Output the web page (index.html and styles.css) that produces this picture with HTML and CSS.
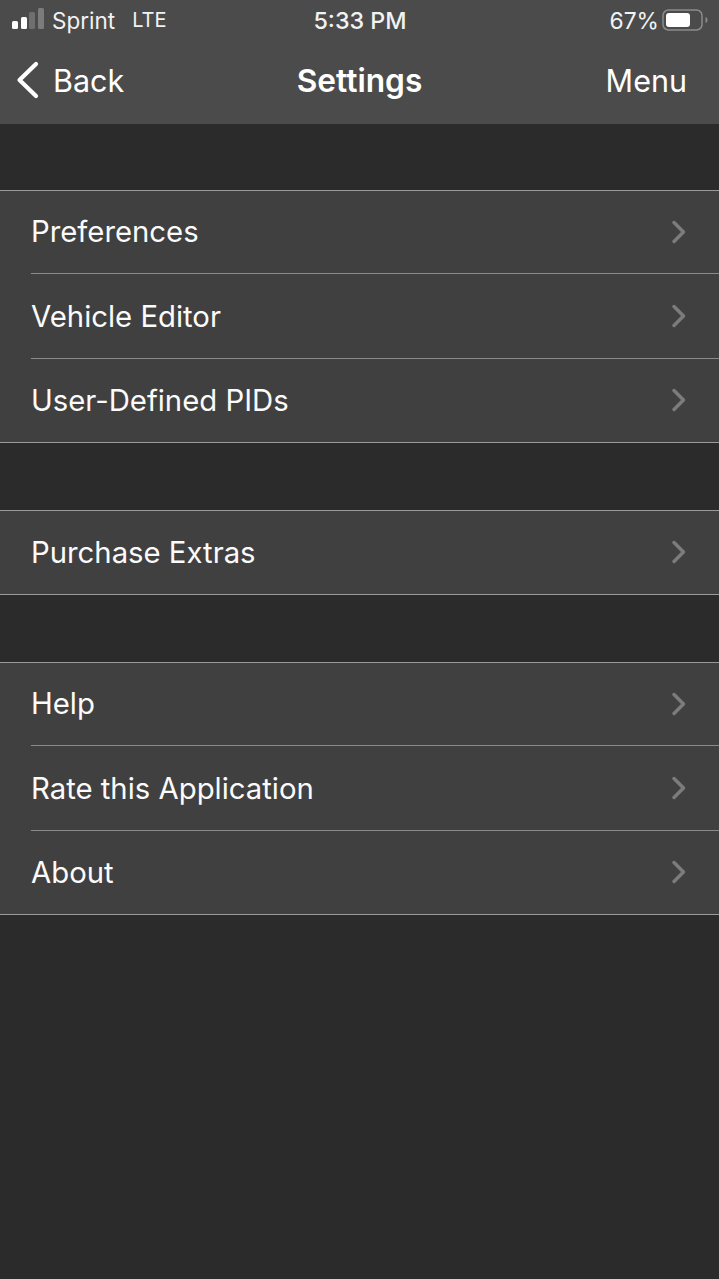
FILE: index.html
```html
<!DOCTYPE html>
<html lang="en">
<head>
<meta charset="utf-8">
<title>Settings</title>
<link rel="stylesheet" href="styles.css">
</head>
<body>
<header class="header">
  <div class="status">
    <div class="status-left">
      <svg class="signal" width="32" height="24" viewBox="0 0 32 24">
        <rect x="0" y="13" width="6" height="8" rx="1.5" fill="#fff"/>
        <rect x="9" y="9" width="6" height="12" rx="1.5" fill="#fff"/>
        <rect x="17" y="4" width="6" height="17" rx="1.5" fill="#6f6f6f"/>
        <rect x="26" y="0" width="6" height="21" rx="1.5" fill="#7c7c7c"/>
      </svg>
      <span class="carrier">Sprint</span>
      <span class="network">LTE</span>
    </div>
    <div class="clock">5:33 PM</div>
    <div class="status-right">
      <span class="percent">67%</span>
      <svg class="battery" width="46" height="22" viewBox="0 0 46 22">
        <rect x="1" y="1" width="39" height="20" rx="5.500" fill="none" stroke="#8c8c8c" stroke-width="1.500"/>
        <rect x="4" y="4" width="24" height="14" rx="3" fill="#fff"/>
        <path d="M43.500 8c1.300.4 2 1.500 2 3s-.7 2.600-2 3z" fill="#8c8c8c"/>
      </svg>
    </div>
  </div>
  <nav class="nav">
    <a class="back">
      <svg class="back-chevron" width="24" height="38" viewBox="0 0 24 38">
        <path d="M20 3 L3.500 19 L20 35" fill="none" stroke="#fff" stroke-width="4.200" stroke-linecap="round" stroke-linejoin="round"/>
      </svg>
      <span>Back</span>
    </a>
    <div class="title">Settings</div>
    <a class="menu">Menu</a>
  </nav>
</header>
<main class="content">
  <section class="group">
    <div class="row"><span>Preferences</span><svg class="chev" width="16" height="24" viewBox="0 0 16 24"><path d="M3 2.500 L12.500 12 L3 21.500" /></svg></div>
    <div class="row"><span>Vehicle Editor</span><svg class="chev" width="16" height="24" viewBox="0 0 16 24"><path d="M3 2.500 L12.500 12 L3 21.500" /></svg></div>
    <div class="row"><span>User-Defined PIDs</span><svg class="chev" width="16" height="24" viewBox="0 0 16 24"><path d="M3 2.500 L12.500 12 L3 21.500" /></svg></div>
  </section>
  <section class="group">
    <div class="row"><span>Purchase Extras</span><svg class="chev" width="16" height="24" viewBox="0 0 16 24"><path d="M3 2.500 L12.500 12 L3 21.500" /></svg></div>
  </section>
  <section class="group">
    <div class="row"><span>Help</span><svg class="chev" width="16" height="24" viewBox="0 0 16 24"><path d="M3 2.500 L12.500 12 L3 21.500" /></svg></div>
    <div class="row"><span>Rate this Application</span><svg class="chev" width="16" height="24" viewBox="0 0 16 24"><path d="M3 2.500 L12.500 12 L3 21.500" /></svg></div>
    <div class="row"><span>About</span><svg class="chev" width="16" height="24" viewBox="0 0 16 24"><path d="M3 2.500 L12.500 12 L3 21.500" /></svg></div>
  </section>
</main>
</body>
</html>
```
FILE: styles.css
```css
* { box-sizing: border-box; }
html, body { margin: 0; height: 100%; }
body {
  background: #2b2b2b;
  color: #fff;
  font-family: Inter, "Liberation Sans", sans-serif;
  overflow: hidden;
}
.header { background: #4b4b4b; height: 124px; }
.status {
  height: 40px;
  display: grid;
  grid-template-columns: 1fr auto 1fr;
  align-items: center;
  padding: 0 11px 0 12px;
  font-size: 22.800px;
  color: #f2f2f2;
}
.status-left { display: flex; align-items: center; }
.signal { margin-right: 8px; }
.carrier { font-size: 22.500px; }
.network { margin-left: 17px; font-size: 20px; }
.clock { font-weight: 500; font-size: 23.300px; }
.status-right { display: flex; align-items: center; justify-content: flex-end; gap: 3px; }
.nav {
  height: 84px;
  display: grid;
  grid-template-columns: 1fr auto 1fr;
  align-items: center;
  padding: 0 32px 4px;
  font-size: 30.500px;
}
.back { display: flex; align-items: center; gap: 13px; margin-left: -16px; }
.title { font-weight: 600; font-size: 31.700px; }
.menu { justify-self: end; }
.content { padding-top: 66px; display: flex; flex-direction: column; gap: 67px; }
.group {
  background: #404040;
  border-top: 1px solid #9a9a9a;
  border-bottom: 1px solid #9a9a9a;
}
.row {
  height: 85px;
  margin-left: 31px;
  padding: 0 32px 0 0;
  display: flex;
  align-items: center;
  justify-content: space-between;
  font-size: 29.300px;
  color: #fbfbfb;
  border-bottom: 1px solid #8a8a8a;
}
.row:first-child { height: 83px; padding-bottom: 1px; }
.row:last-child { border-bottom: 0; height: 83px; padding-bottom: 1px; }
.chev path {
  fill: none;
  stroke: #7c7c7c;
  stroke-width: 3.500;
  stroke-linecap: round;
  stroke-linejoin: round;
}
```
